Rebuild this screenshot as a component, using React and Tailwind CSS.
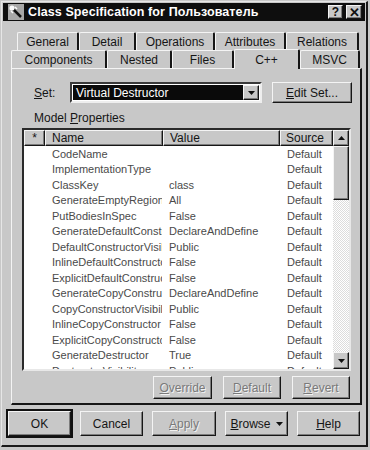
import React from 'react'

const ROWS = [
  ['CodeName', '', 'Default'],
  ['ImplementationType', '', 'Default'],
  ['ClassKey', 'class', 'Default'],
  ['GenerateEmptyRegion', 'All', 'Default'],
  ['PutBodiesInSpec', 'False', 'Default'],
  ['GenerateDefaultConstructor', 'DeclareAndDefine', 'Default'],
  ['DefaultConstructorVisibility', 'Public', 'Default'],
  ['InlineDefaultConstructor', 'False', 'Default'],
  ['ExplicitDefaultConstructor', 'False', 'Default'],
  ['GenerateCopyConstructor', 'DeclareAndDefine', 'Default'],
  ['CopyConstructorVisibility', 'Public', 'Default'],
  ['InlineCopyConstructor', 'False', 'Default'],
  ['ExplicitCopyConstructor', 'False', 'Default'],
  ['GenerateDestructor', 'True', 'Default'],
  ['DestructorVisibility', 'Public', 'Default'],
]

const TABS_BACK = [
  { label: 'General', w: 'w-[62px]' },
  { label: 'Detail', w: 'w-[57px]' },
  { label: 'Operations', w: 'w-[79px]' },
  { label: 'Attributes', w: 'w-[71px]' },
  { label: 'Relations', w: 'w-[73px]' },
]

const TABS_FRONT = [
  { label: 'Components', w: 'w-[96px]' },
  { label: 'Nested', w: 'w-[65px]' },
  { label: 'Files', w: 'w-[62px]' },
  { label: 'C++', w: 'w-[66px]', active: true },
  { label: 'MSVC', w: 'w-[60px]' },
]

// raised win95 edge
const RAISED = 'border border-t-[#f4f4f4] border-l-[#f4f4f4] border-r-[#161616] border-b-[#161616] shadow-[inset_-1px_-1px_0_#7c7c7c]'

function Btn({ children, className = '', disabled = false, isDefault = false }) {
  return (
    <div
      className={`flex items-center justify-center text-[12px] ${RAISED} ${isDefault ? 'outline outline-2 outline-[#111]' : ''} ${disabled ? 'text-[#7a7a7a] [text-shadow:1px_1px_0_#f2f2f2]' : 'text-[#151515]'} ${className}`}
    >
      {children}
    </div>
  )
}

function Tab({ label, w, active }) {
  return (
    <div
      className={`${w} h-[18px] flex items-center justify-center text-[12px] text-[#151515] border-t border-l border-r-2 rounded-t-[2px] ${active ? 'border-t-[#f4f4f4] border-l-[#f4f4f4] border-r-[#161616] bg-[#c8c8c8] h-[20px] -mt-[2px] relative z-10 -mb-[1px]' : 'border-t-[#f4f4f4] border-l-[#f4f4f4] border-r-[#161616]'}`}
    >
      {label}
    </div>
  )
}

export default function App() {
  return (
    <div className="w-[370px] h-[450px] bg-[#c8c8c8] overflow-hidden font-['Liberation_Sans',Arial,sans-serif]">
      <div className="ml-[1px] mt-[1px] w-[367px] h-[446px] border border-t-[#e6e6e6] border-l-[#e6e6e6] border-r-2 border-b-2 border-r-[#1a1a1a] border-b-[#1a1a1a] flex flex-col">
        {/* Title bar */}
        <div className="mx-[1px] mt-[1px] h-[18px] bg-[#0e0e0e] flex items-center pl-[5px] pr-[3px]">
          <svg width="16" height="16" viewBox="0 0 16 16" className="shrink-0">
            <rect x="0" y="0" width="16" height="16" fill="#a8a8a8" />
            <path d="M3 3 L13 13" stroke="#111" strokeWidth="2.5" />
            <circle cx="4" cy="4" r="2.6" fill="#fafafa" />
            <path d="M7 3 L9 5" stroke="#fafafa" strokeWidth="1.5" />
            <path d="M3 7 L5 9" stroke="#fafafa" strokeWidth="1.5" />
          </svg>
          <span className="ml-[4px] text-white font-bold text-[12.5px] tracking-[0.1px] whitespace-nowrap">
            Class Specification for Пользователь
          </span>
          <div className="flex-1" />
          <div className={`w-[15px] h-[14px] bg-[#c8c8c8] flex items-center justify-center text-[12px] font-bold text-[#111] ${RAISED}`}>?</div>
          <div className={`ml-[3px] w-[16px] h-[14px] bg-[#c8c8c8] flex items-center justify-center text-[13px] font-bold text-[#111] leading-none ${RAISED}`}>✕</div>
        </div>

        {/* Tabs */}
        <div className="mt-[11px] ml-[15px] flex">
          {TABS_BACK.map(t => <Tab key={t.label} {...t} />)}
        </div>
        <div className="ml-[9px] flex items-end">
          {TABS_FRONT.map(t => <Tab key={t.label} {...t} />)}
        </div>

        {/* Panel */}
        <div className="ml-[9px] w-[351px] h-[337px] border-t border-l border-r-2 border-b-2 border-t-[#f4f4f4] border-l-[#f4f4f4] border-r-[#161616] border-b-[#161616] flex flex-col pl-[10px] pt-[13px]">
          <div className="flex items-center h-[21px]">
            <span className="ml-[12px] w-[36px] text-[12px] text-[#151515]"><u>S</u>et:</span>
            <div className="w-[192px] h-[21px] border-2 border-t-[#3a3a3a] border-l-[#3a3a3a] border-r-[#eeeeee] border-b-[#eeeeee] bg-white flex items-center p-[1px]">
              <div className="flex-1 h-full bg-[#0a0a0a] text-white text-[12px] flex items-center pl-[3px]">Virtual Destructor</div>
              <div className={`w-[16px] h-full bg-[#c8c8c8] flex items-center justify-center ${RAISED}`}>
                <svg width="7" height="4" viewBox="0 0 7 4"><path d="M0 0 H7 L3.5 4 Z" fill="#111" /></svg>
              </div>
            </div>
            <Btn className="ml-[10px] w-[80px] h-[21px]"><span><u>E</u>dit Set...</span></Btn>
          </div>

          <div className="mt-[8px] ml-[12px] h-[14px] text-[12px] text-[#151515] leading-[14px]">
            Model <u>P</u>roperties
          </div>

          {/* Properties table */}
          <div className="mt-[3px] w-[329px] h-[243px] border-2 border-t-[#2a2a2a] border-l-[#2a2a2a] border-r-[#e8e8e8] border-b-[#e8e8e8] bg-white flex">
            <div className="w-[309px] flex flex-col overflow-hidden">
              <div className="flex h-[16px] shrink-0 bg-[#c8c8c8] text-[12px] text-[#151515]">
                <div className={`w-[21px] flex items-center justify-center ${RAISED}`}>*</div>
                <div className={`w-[118px] flex items-center pl-[6px] ${RAISED}`}>Name</div>
                <div className={`w-[117px] flex items-center pl-[6px] ${RAISED}`}>Value</div>
                <div className={`w-[53px] flex items-center pl-[5px] ${RAISED}`}>Source</div>
              </div>
              <div className="flex flex-col text-[11px] text-[#4a4a4a]">
                {ROWS.map(([name, value, source]) => (
                  <div key={name} className="flex h-[15.5px] shrink-0 items-center whitespace-nowrap">
                    <div className="w-[21px] shrink-0" />
                    <div className="w-[117px] shrink-0 overflow-hidden pl-[7px]">{name}</div>
                    <div className="w-[118px] shrink-0 overflow-hidden pl-[7px]">{value}</div>
                    <div className="w-[53px] shrink-0 overflow-hidden pl-[7px]">{source}</div>
                  </div>
                ))}
              </div>
            </div>
            {/* Scrollbar */}
            <div className="w-[16px] flex flex-col bg-[#c8c8c8]">
              <div className={`h-[16px] shrink-0 flex items-center justify-center ${RAISED}`}>
                <svg width="7" height="4" viewBox="0 0 7 4"><path d="M0 4 H7 L3.5 0 Z" fill="#111" /></svg>
              </div>
              <div className={`h-[54px] shrink-0 ${RAISED}`} />
              <div className="flex-1 bg-[repeating-conic-gradient(#dcdcdc_0%_25%,#ffffff_0%_50%)] bg-[length:2px_2px]" />
              <div className={`h-[17px] shrink-0 flex items-center justify-center ${RAISED}`}>
                <svg width="7" height="4" viewBox="0 0 7 4"><path d="M0 0 H7 L3.5 4 Z" fill="#111" /></svg>
              </div>
            </div>
          </div>

          <div className="mt-[5px] flex justify-end pr-[10px] gap-[11px]">
            <Btn disabled className="w-[59px] h-[23px]"><span><u>O</u>verride</span></Btn>
            <Btn disabled className="w-[58px] h-[23px]"><span><u>D</u>efault</span></Btn>
            <Btn disabled className="w-[58px] h-[23px]"><span><u>R</u>evert</span></Btn>
          </div>
        </div>

        {/* Dialog buttons */}
        <div className="mt-[6px] ml-[6px] flex gap-[9px]">
          <Btn isDefault className="w-[63px] h-[25px]">OK</Btn>
          <Btn className="w-[63px] h-[25px]">Cancel</Btn>
          <Btn disabled className="w-[64px] h-[25px]"><span><u>A</u>pply</span></Btn>
          <Btn className="w-[63px] h-[25px]">
            <span><u>B</u>rowse</span>
            <svg width="7" height="4" viewBox="0 0 7 4" className="ml-[5px]"><path d="M0 0 H7 L3.5 4 Z" fill="#111" /></svg>
          </Btn>
          <Btn className="w-[63px] h-[25px]"><span><u>H</u>elp</span></Btn>
        </div>
      </div>
    </div>
  )
}
